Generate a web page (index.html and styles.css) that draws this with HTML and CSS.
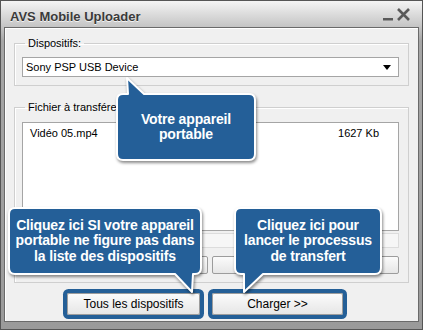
FILE: index.html
```html
<!DOCTYPE html>
<html lang="fr">
<head>
  <meta charset="UTF-8">
  <title>AVS Mobile Uploader</title>
  <link rel="stylesheet" href="styles.css">
</head>
<body>

<div class="window">
  <div class="titlebar">
    <span class="title">AVS Mobile Uploader</span>
    <svg class="controls" width="32" height="16" viewBox="0 0 32 16">
      <rect x="2" y="11" width="10" height="2.5" fill="#5a5a5a"/>
      <path d="M17 2 L28 13 M28 2 L17 13" stroke="#5a5a5a" stroke-width="2.6" fill="none"/>
    </svg>
  </div>

  <div class="client">
    <fieldset class="group group-devices">
      <legend>Dispositifs:</legend>
      <div class="select">
        <span>Sony PSP USB Device</span>
        <span class="arrow"></span>
      </div>
    </fieldset>

    <fieldset class="group group-files">
      <legend>Fichier à transférer</legend>
      <div class="filelist">
        <div class="file-row">
          <span>Vidéo 05.mp4</span>
          <span class="size">1627 Kb</span>
        </div>
      </div>
      <div class="progress"></div>
      <div class="list-buttons">
        <button class="btn small"></button>
        <button class="btn small"></button>
      </div>
    </fieldset>

    <div class="actions">
      <button class="btn main hl">Tous les dispositifs</button>
      <button class="btn main hl">Charger &gt;&gt;</button>
    </div>
  </div>

  <!-- callouts over the dialog -->
  <div class="callout c-device">
    <svg viewBox="0 0 138 66">
      <path d="M6 0 H11 L10 -16 L27 0 H132 Q138 0 138 6 V60 Q138 66 132 66 H6 Q0 66 0 60 V6 Q0 0 6 0 Z"/>
    </svg>
    <div class="callout-text">Votre appareil<br>portable</div>
  </div>

  <div class="callout c-all">
    <svg viewBox="0 0 192 66">
      <path d="M6 0 H186 Q192 0 192 6 V60 Q192 66 186 66 H184 L183 84 L166 66 H6 Q0 66 0 60 V6 Q0 0 6 0 Z"/>
    </svg>
    <div class="callout-text">Cliquez ici SI votre appareil<br>portable ne figure pas dans<br>la liste des dispositifs</div>
  </div>

  <div class="callout c-load">
    <svg viewBox="0 0 146 66">
      <path d="M6 0 H140 Q146 0 146 6 V60 Q146 66 140 66 H28 L9 84 L9 66 H6 Q0 66 0 60 V6 Q0 0 6 0 Z"/>
    </svg>
    <div class="callout-text">Cliquez ici pour<br>lancer le processus<br>de transfert</div>
  </div>
</div>

</body>
</html>
```

FILE: styles.css
```css
body {
  margin: 0;
  padding: 0;
  font-family: 'Liberation Sans', Arial, sans-serif;
  font-size: 11px;
  color: #000;
  background: #fff;
}

.window {
  position: relative;
  width: 423px;
  height: 330px;
  box-sizing: border-box;
  border: 1px solid #555;
  padding: 0 3px 7px;
  display: flex;
  flex-direction: column;
  background: linear-gradient(#f4f4f4, #c4c4c4 26px, #a6a6a6 40px, #9a9a9a);
}

.titlebar {
  height: 26px;
  display: flex;
  align-items: center;
  justify-content: space-between;
  padding: 0 6px 0 6px;
}

.title {
  font-weight: bold;
  font-size: 13px;
  color: #3a3a3a;
  text-shadow: 0 1px 0 #f4f4f4;
  margin-top: 4px;
}

.controls {
  margin-top: 2px;
}

.client {
  flex: 1;
  border: 1px solid #6a6a6a;
  box-shadow: inset 1px 1px 0 #fff;
  background: #f0f0f0;
  padding: 9px 9px 0 9px;
}

.group {
  margin: 0;
  border: 1px solid #cfcfcf;
  box-shadow: inset 1px 1px 0 #fff;
  padding: 7px 9px 8px 7px;
}

.group legend {
  padding: 0 3px;
  margin-left: 3px;
  line-height: 13px;
}

.group-files {
  margin-top: 15px;
  padding-top: 8px;
}

.select {
  height: 18px;
  border: 1px solid #a5a5a5;
  background: #fff;
  display: flex;
  align-items: center;
  justify-content: space-between;
  padding: 0 7px 0 3px;
  font-size: 11px;
}

.arrow {
  width: 0;
  height: 0;
  border-left: 4px solid transparent;
  border-right: 4px solid transparent;
  border-top: 5px solid #000;
}

.filelist {
  height: 105px;
  border: 1px solid #a5a5a5;
  background: #fff;
  padding: 2px 0 0 7px;
}

.file-row {
  display: flex;
  justify-content: space-between;
  padding-right: 19px;
  height: 16px;
  line-height: 16px;
}

.progress {
  height: 13px;
  margin-top: 2px;
  border: 1px solid #dcdcdc;
  background: #f6f6f6;
}

.list-buttons {
  display: grid;
  grid-template-columns: 186px 1fr;
  gap: 4px;
  margin-top: 8px;
}

.btn {
  font-family: 'Liberation Sans', Arial, sans-serif;
  font-size: 11px;
  color: #000;
  border: 1px solid #9c9c9c;
  border-radius: 2px;
  background: linear-gradient(#fbfbfb, #e6e6e6);
  padding: 0;
  margin: 0;
}

.btn.small {
  height: 18px;
}

.actions {
  display: flex;
  gap: 12px;
  margin-top: 10px;
  padding-left: 53px;
}

.btn.main {
  height: 22px;
  font-size: 12px;
}

.actions .btn:first-child {
  width: 133px;
}

.actions .btn:last-child {
  width: 131px;
}

.hl {
  box-shadow: 0 0 0 4px #245f97;
}

.callout {
  position: absolute;
  display: flex;
  align-items: center;
  justify-content: center;
}

.callout svg {
  position: absolute;
  left: 0;
  top: 0;
  width: 100%;
  height: 100%;
  overflow: visible;
  filter: drop-shadow(1px 2px 1.5px rgba(0, 0, 0, 0.45));
}

.callout path {
  fill: #245f98;
  stroke: #fff;
  stroke-width: 2;
  stroke-linejoin: round;
}

.callout-text {
  position: relative;
  color: #fff;
  font-weight: bold;
  font-size: 14px;
  letter-spacing: -0.15px;
  line-height: 15.5px;
  text-align: center;
}

.c-device {
  left: 116px;
  top: 93px;
  width: 138px;
  height: 66px;
}

.c-all {
  left: 8px;
  top: 207px;
  width: 192px;
  height: 66px;
}

.c-load {
  left: 234px;
  top: 207px;
  width: 146px;
  height: 66px;
}
```
